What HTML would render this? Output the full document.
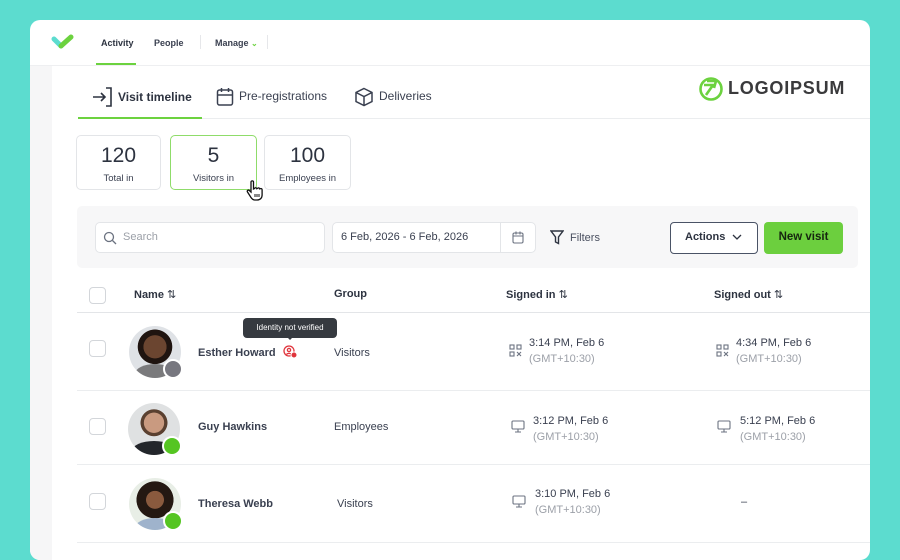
<!DOCTYPE html>
<html><head><meta charset="utf-8"><style>
*{box-sizing:border-box;margin:0;padding:0}
body{width:900px;height:544px;overflow:hidden;background:#5cdccf;font-family:"Liberation Sans",sans-serif;color:#2d3340;position:relative}
.a{position:absolute}
.card{left:30px;top:20px;width:840px;height:540px;background:#fff;border-radius:10px;overflow:hidden}
.t{position:absolute;white-space:nowrap}
.box{position:absolute;border:1px solid #e3e5e8;border-radius:5px;background:#fff}
.hl{position:absolute;height:1px;background:#ebedef}
.av{position:absolute;width:52px;height:52px;border-radius:50%;overflow:hidden}
.dot{position:absolute;width:20px;height:20px;border-radius:50%;border:2px solid #fff}
.cb{position:absolute;width:17px;height:17px;border:1.5px solid #d3d6da;border-radius:4px;background:#fff}
</style></head><body>
<div class="a card">
 <div class="a" style="left:0;top:46px;width:22px;height:500px;background:#f6f6f7"></div>
 <div class="hl" style="left:0;top:45px;width:840px;background:#eeeff1"></div>
 <svg class="a" style="left:21px;top:14px" width="24" height="16" viewBox="0 0 24 16"><path d="M3 5 L10 12" stroke="#5cdccf" stroke-width="5" stroke-linecap="round"/><path d="M10 12 L20 3" stroke="#6cd23f" stroke-width="5" stroke-linecap="round"/></svg>
 <div class="t" style="left:71px;top:18px;font-size:9px;font-weight:bold;color:#2d3340">Activity</div>
 <div class="a" style="left:66px;top:43px;width:40px;height:2px;background:#6cd23f"></div>
 <div class="t" style="left:124px;top:18px;font-size:9px;font-weight:bold;color:#3a4050">People</div>
 <div class="a" style="left:170px;top:15px;width:1px;height:14px;background:#e6e7ea"></div>
 <div class="t" style="left:185px;top:18px;font-size:9px;font-weight:bold;color:#3a4050">Manage <span style="color:#6cd23f;font-size:8px">&#8964;</span></div>
 <div class="a" style="left:237px;top:15px;width:1px;height:14px;background:#e6e7ea"></div>
 <svg class="a" style="left:62px;top:67px" width="22" height="20" viewBox="0 0 22 20" fill="none" stroke="#2d3340" stroke-width="1.6"><path d="M1 10h12M9 6l4 4-4 4M14 1h5v18h-5"/></svg>
 <div class="t" style="left:88px;top:70px;font-size:12px;font-weight:bold">Visit timeline</div>
 <div class="a" style="left:48px;top:97px;width:124px;height:2px;background:#6cd23f"></div>
 <div class="hl" style="left:172px;top:98px;width:668px"></div>
 <svg class="a" style="left:186px;top:67px" width="18" height="20" viewBox="0 0 18 20" fill="none" stroke="#3a4050" stroke-width="1.5"><rect x="1.5" y="3" width="15" height="15" rx="2"/><path d="M1.5 8h15M5.5 1v4M12.5 1v4"/></svg>
 <div class="t" style="left:209px;top:69px;font-size:12px;color:#3a4050">Pre-registrations</div>
 <svg class="a" style="left:324px;top:67px" width="20" height="20" viewBox="0 0 20 20" fill="none" stroke="#3a4050" stroke-width="1.5"><path d="M10 1.5l8 4v9l-8 4-8-4v-9z M2 5.5l8 4 8-4 M10 9.5v9"/></svg>
 <div class="t" style="left:349px;top:69px;font-size:12px;color:#3a4050">Deliveries</div>
 <svg class="a" style="left:668px;top:56px" width="26" height="26" viewBox="0 0 26 26" fill="none" stroke="#6cd23f" stroke-width="2.6"><circle cx="13" cy="13" r="10.5"/><path d="M6 9h9l-7 10M9 5h9l-2 7"/></svg>
 <div class="t" style="left:698px;top:58px;font-size:18px;font-weight:900;letter-spacing:0.8px;color:#3a3a3c">LOGOIPSUM</div>
 <div class="box" style="left:46px;top:115px;width:85px;height:55px"></div>
 <div class="t" style="left:46px;top:124px;width:85px;text-align:center;font-size:21px;color:#2d3340">120</div>
 <div class="t" style="left:46px;top:153px;width:85px;text-align:center;font-size:9.5px;color:#3a4050">Total in</div>
 <div class="box" style="left:140px;top:115px;width:87px;height:55px;border-color:#8fdc6a"></div>
 <div class="t" style="left:140px;top:124px;width:87px;text-align:center;font-size:21px">5</div>
 <div class="t" style="left:140px;top:153px;width:87px;text-align:center;font-size:9.5px;color:#3a4050">Visitors in</div>
 <div class="box" style="left:234px;top:115px;width:87px;height:55px"></div>
 <div class="t" style="left:234px;top:124px;width:87px;text-align:center;font-size:21px">100</div>
 <div class="t" style="left:234px;top:153px;width:87px;text-align:center;font-size:9.5px;color:#3a4050">Employees in</div>
 <svg class="a" style="left:216px;top:160px" width="18" height="22" viewBox="0 0 18 22"><path d="M5 2c0-1.5 2.5-1.5 2.5 0v7l1-.5c.5-1 2-1 2.3.2l.7-.3c.6-.8 2-.6 2.2.5l.6-.2c.8-.4 1.8.1 1.8 1V15c0 3-2 5-5 5H9c-2 0-3-1-4-2.5L1.5 12c-.8-1.2.7-2.5 1.8-1.5L5 12z" fill="#fff" stroke="#111" stroke-width="1.3"/><path d="M9 14v3M11 14v3M13 14v3" stroke="#111" stroke-width="1"/></svg>
 <div class="a" style="left:47px;top:186px;width:781px;height:62px;background:#f7f7f8;border-radius:5px"></div>
 <div class="box" style="left:65px;top:202px;width:230px;height:31px"></div>
 <svg class="a" style="left:73px;top:211px" width="14" height="14" viewBox="0 0 14 14" fill="none" stroke="#6b7280" stroke-width="1.3"><circle cx="6" cy="6" r="4.5"/><path d="M9.5 9.5L13 13"/></svg>
 <div class="t" style="left:93px;top:211px;font-size:11px;color:#9ca0a8">Search</div>
 <div class="box" style="left:302px;top:202px;width:204px;height:31px"></div>
 <div class="a" style="left:470px;top:203px;width:1px;height:29px;background:#e3e5e8"></div>
 <div class="t" style="left:311px;top:211px;font-size:11px;color:#3a4050">6 Feb, 2026 - 6 Feb, 2026</div>
 <svg class="a" style="left:482px;top:211px" width="12" height="13" viewBox="0 0 12 13" fill="none" stroke="#6b7280" stroke-width="1.1"><rect x="1" y="2" width="10" height="10" rx="1.5"/><path d="M1 5h10M4 0.5v3M8 0.5v3"/></svg>
 <svg class="a" style="left:520px;top:210px" width="14" height="15" viewBox="0 0 14 15" fill="none" stroke="#2d3340" stroke-width="1.4"><path d="M1 1h12L8.5 7v6.5L5.5 12V7z"/></svg>
 <div class="t" style="left:540px;top:212px;font-size:11px;color:#4a5060">Filters</div>
 <div class="a" style="left:640px;top:202px;width:88px;height:32px;border:1px solid #4a5366;border-radius:4px;background:#fff"></div>
 <div class="t" style="left:655px;top:211px;font-size:11px;font-weight:bold;color:#2d3340">Actions</div>
 <svg class="a" style="left:702px;top:214px" width="10" height="7" viewBox="0 0 10 7" fill="none" stroke="#2d3340" stroke-width="1.3"><path d="M1 1l4 4 4-4"/></svg>
 <div class="a" style="left:734px;top:202px;width:79px;height:32px;background:#6ccf3e;border-radius:4px"></div>
 <div class="t" style="left:734px;top:211px;width:79px;text-align:center;font-size:11.5px;font-weight:bold;color:#16250f">New visit</div>
 <div class="cb" style="left:59px;top:267px"></div>
 <div class="t" style="left:104px;top:268px;font-size:11px;font-weight:bold;color:#2d3340">Name <span style="font-weight:normal">&#8645;</span></div>
 <div class="t" style="left:304px;top:268px;font-size:11px;font-weight:bold;color:#2d3340">Group</div>
 <div class="t" style="left:476px;top:268px;font-size:11px;font-weight:bold;color:#2d3340">Signed in <span style="font-weight:normal">&#8645;</span></div>
 <div class="t" style="left:684px;top:268px;font-size:11px;font-weight:bold;color:#2d3340">Signed out <span style="font-weight:normal">&#8645;</span></div>
 <div class="hl" style="left:47px;top:292px;width:793px;background:#e3e5e8"></div>
 <div class="cb" style="left:59px;top:320px"></div>
 <div class="av" style="left:99px;top:306px;background:radial-gradient(circle at 50% 40%,#6b4530 0 28%,#1f1410 29% 42%,#dfe2e6 43%)"><div class="a" style="left:6px;top:38px;width:40px;height:20px;border-radius:50%;background:#7a7a7c"></div></div>
 <div class="dot" style="left:133px;top:339px;background:#77777f"></div>
 <div class="t" style="left:168px;top:327px;font-size:11px;font-weight:bold;color:#3a4050">Esther Howard</div>
 <svg class="a" style="left:253px;top:325px" width="15" height="14" viewBox="0 0 15 14" fill="none" stroke="#e0353d" stroke-width="1.3"><circle cx="6" cy="6" r="5"/><circle cx="6" cy="5" r="1.6"/><path d="M3.5 9.5c1-1.5 4-1.5 5 0"/><circle cx="11" cy="10" r="3" fill="#e0353d" stroke="#fff" stroke-width="1"/></svg>
 <div class="a" style="left:213px;top:298px;width:94px;height:20px;background:#363a40;border-radius:4px"></div>
 <div class="a" style="left:256px;top:316px;width:0;height:0;border-left:4px solid transparent;border-right:4px solid transparent;border-top:4px solid #363a40"></div>
 <div class="t" style="left:213px;top:303px;width:94px;text-align:center;font-size:8px;color:#fff">Identity not verified</div>
 <div class="t" style="left:304px;top:327px;font-size:11px;color:#3a4050">Visitors</div>
 <svg class="a" style="left:479px;top:324px" width="13" height="13" viewBox="0 0 13 13" fill="none" stroke="#6b7280" stroke-width="1.1"><rect x="1" y="1" width="4" height="4"/><rect x="8" y="1" width="4" height="4"/><rect x="1" y="8" width="4" height="4"/><path d="M8 8l4 4M12 8l-4 4"/></svg>
 <div class="t" style="left:499px;top:317px;font-size:11px;color:#3a4050">3:14 PM, Feb 6</div>
 <div class="t" style="left:499px;top:333px;font-size:11px;color:#9ca0a8">(GMT+10:30)</div>
 <svg class="a" style="left:686px;top:324px" width="13" height="13" viewBox="0 0 13 13" fill="none" stroke="#6b7280" stroke-width="1.1"><rect x="1" y="1" width="4" height="4"/><rect x="8" y="1" width="4" height="4"/><rect x="1" y="8" width="4" height="4"/><path d="M8 8l4 4M12 8l-4 4"/></svg>
 <div class="t" style="left:706px;top:317px;font-size:11px;color:#3a4050">4:34 PM, Feb 6</div>
 <div class="t" style="left:706px;top:333px;font-size:11px;color:#9ca0a8">(GMT+10:30)</div>
 <div class="hl" style="left:47px;top:370px;width:793px"></div>
 <div class="cb" style="left:59px;top:398px"></div>
 <div class="av" style="left:98px;top:383px;background:radial-gradient(circle at 50% 38%,#c99a80 0 24%,#5a4030 25% 32%,#dfe1e2 33%)"><div class="a" style="left:4px;top:38px;width:44px;height:20px;border-radius:50%;background:#23262b"></div></div>
 <div class="dot" style="left:132px;top:416px;background:#55c522"></div>
 <div class="t" style="left:168px;top:401px;font-size:11px;font-weight:bold;color:#3a4050">Guy Hawkins</div>
 <div class="t" style="left:304px;top:401px;font-size:11px;color:#3a4050">Employees</div>
 <svg class="a" style="left:481px;top:400px" width="14" height="13" viewBox="0 0 14 13" fill="none" stroke="#6b7280" stroke-width="1.1"><rect x="1" y="1" width="12" height="8" rx="1"/><path d="M7 9v3M4 12h6"/></svg>
 <div class="t" style="left:503px;top:395px;font-size:11px;color:#3a4050">3:12 PM, Feb 6</div>
 <div class="t" style="left:503px;top:411px;font-size:11px;color:#9ca0a8">(GMT+10:30)</div>
 <svg class="a" style="left:687px;top:400px" width="14" height="13" viewBox="0 0 14 13" fill="none" stroke="#6b7280" stroke-width="1.1"><rect x="1" y="1" width="12" height="8" rx="1"/><path d="M7 9v3M4 12h6"/></svg>
 <div class="t" style="left:710px;top:395px;font-size:11px;color:#3a4050">5:12 PM, Feb 6</div>
 <div class="t" style="left:710px;top:411px;font-size:11px;color:#9ca0a8">(GMT+10:30)</div>
 <div class="hl" style="left:47px;top:444px;width:793px"></div>
 <div class="cb" style="left:59px;top:473px"></div>
 <div class="av" style="left:99px;top:458px;background:radial-gradient(circle at 50% 42%,#8a5a3e 0 22%,#241812 23% 46%,#e8eee6 47%)"><div class="a" style="left:6px;top:40px;width:40px;height:20px;border-radius:50%;background:#9fb3cc"></div></div>
 <div class="dot" style="left:133px;top:491px;background:#55c522"></div>
 <div class="t" style="left:168px;top:478px;font-size:11px;font-weight:bold;color:#3a4050">Theresa Webb</div>
 <div class="t" style="left:307px;top:478px;font-size:11px;color:#3a4050">Visitors</div>
 <svg class="a" style="left:482px;top:475px" width="14" height="13" viewBox="0 0 14 13" fill="none" stroke="#6b7280" stroke-width="1.1"><rect x="1" y="1" width="12" height="8" rx="1"/><path d="M7 9v3M4 12h6"/></svg>
 <div class="t" style="left:505px;top:468px;font-size:11px;color:#3a4050">3:10 PM, Feb 6</div>
 <div class="t" style="left:505px;top:484px;font-size:11px;color:#9ca0a8">(GMT+10:30)</div>
 <div class="t" style="left:711px;top:476px;font-size:11px;color:#3a4050">–</div>
 <div class="hl" style="left:47px;top:522px;width:793px"></div>
</div>
</body></html>
